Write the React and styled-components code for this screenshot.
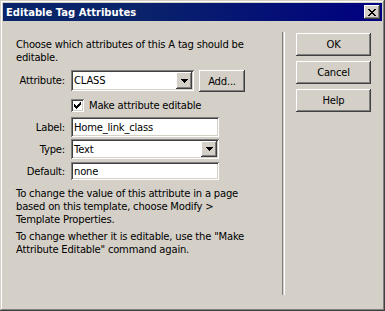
import styled, { createGlobalStyle } from 'styled-components';

const GlobalStyle = createGlobalStyle`
    html, body {
        margin: 0;
        padding: 0;
        background: #D4D0C8;
    }
    body {
        font-family: Tahoma, "DejaVu Sans", Verdana, sans-serif;
        font-size: 10px;
        letter-spacing: -0.2px;
        color: #000;
    }
`;

const raised = `
    background: #D4D0C8;
    box-shadow: inset -1px -1px #404040, inset 1px 1px #FFFFFF,
        inset -2px -2px #808080, inset 2px 2px #D4D0C8;
`;

const sunken = `
    background: #FFFFFF;
    box-shadow: inset 1px 1px #808080, inset -1px -1px #FFFFFF,
        inset 2px 2px #404040, inset -2px -2px #D4D0C8;
`;

const Window = styled.div`
    box-sizing: border-box;
    width: 385px;
    height: 311px;
    padding: 3px;
    background: #D4D0C8;
    box-shadow: inset -1px -1px #404040, inset 1px 1px #D4D0C8,
        inset -2px -2px #808080, inset 2px 2px #FFFFFF;
    display: flex;
    flex-direction: column;
`;

const TitleBar = styled.div`
    height: 18px;
    display: flex;
    align-items: center;
    justify-content: space-between;
    padding: 0 2px 0 3px;
    background: linear-gradient(90deg, #0A246A 0%, #0A246A 35%, #000080 100%);
    color: #fff;
    font-weight: bold;
    font-size: 10px;
    letter-spacing: 0;
`;

const CloseButton = styled.div`
    ${raised}
    width: 16px;
    height: 14px;
    display: flex;
    align-items: center;
    justify-content: center;
`;

const Body = styled.div`
    flex: 1;
    display: flex;
`;

const LeftPane = styled.div`
    width: 266px;
    padding: 17px 0 0 13px;
    display: flex;
    flex-direction: column;
`;

const Separator = styled.div`
    width: 1px;
    margin-top: 11px;
    height: 263px;
    border-left: 1px solid #808080;
    border-right: 1px solid #FFFFFF;
`;

const RightPane = styled.div`
    padding: 12px 0 0 11px;
    display: flex;
    flex-direction: column;
    gap: 5px;
`;

const Button = styled.div`
    ${raised}
    box-sizing: border-box;
    width: ${p => p.$w || 75}px;
    height: ${p => p.$h || 23}px;
    display: flex;
    align-items: center;
    justify-content: center;
    margin-top: ${p => p.$mt || 0}px;
`;

const Para = styled.p`
    margin: ${p => p.$mt || 0}px 0 0 0;
    line-height: 13px;
    width: 236px;
`;

const Row = styled.div`
    display: flex;
    align-items: center;
    margin-top: ${p => p.$mt || 0}px;
`;

const Label = styled.label`
    width: 49px;
    text-align: right;
    margin-right: 6px;
`;

const Field = styled.div`
    ${sunken}
    box-sizing: border-box;
    width: ${p => p.$w}px;
    height: ${p => p.$h}px;
    display: flex;
    align-items: center;
    justify-content: space-between;
    padding: 2px 2px 2px 3px;
`;

const ArrowButton = styled.div`
    ${raised}
    box-sizing: border-box;
    width: 16px;
    height: 100%;
    display: flex;
    align-items: center;
    justify-content: center;
`;

const CheckRow = styled.div`
    display: flex;
    align-items: center;
    margin: 7px 0 0 55px;
    gap: 5px;
`;

const Checkbox = styled.div`
    ${sunken}
    width: 13px;
    height: 13px;
    display: flex;
    align-items: center;
    justify-content: center;
`;

const Arrow = () => (
    <svg width="7" height="4" viewBox="0 0 7 4">
        <path d="M0 0h7v1h-1v1h-1v1h-1v1h-1v-1h-1v-1h-1v-1h-1z" fill="#000" />
    </svg>
);

const Select = ({ width, height, value }) => (
    <Field $w={width} $h={height}>
        <span>{value}</span>
        <ArrowButton><Arrow /></ArrowButton>
    </Field>
);

export default function App() {
    return (
        <>
            <GlobalStyle />
            <Window>
                <TitleBar>
                    <span>Editable Tag Attributes</span>
                    <CloseButton>
                        <svg width="8" height="7" viewBox="0 0 8 7">
                            <path d="M0 0h2v1h1v1h2v-1h1v-1h2v1h-1v1h-1v1h-1v1h1v1h1v1h1v1h-2v-1h-1v-1h-2v1h-1v1h-2v-1h1v-1h1v-1h1v-1h-1v-1h-1v-1h-1z" fill="#000" />
                        </svg>
                    </CloseButton>
                </TitleBar>
                <Body>
                    <LeftPane>
                        <Para>Choose which attributes of this A tag should be editable.</Para>
                        <Row $mt={5}>
                            <Label>Attribute:</Label>
                            <Select width={123} height={21} value="CLASS" />
                            <Button $w={46} $h={22} $mt={1} style={{ marginLeft: 5 }}>Add...</Button>
                        </Row>
                        <CheckRow>
                            <Checkbox>
                                <svg width="7" height="7" viewBox="0 0 7 7">
                                    <path d="M6 0h1v3h-1v1h-1v1h-1v1h-1v1h-1v-1h-1v-1h-1v-3h1v1h1v1h1v-1h1v-1h1z" fill="#000" />
                                </svg>
                            </Checkbox>
                            <span>Make attribute editable</span>
                        </CheckRow>
                        <Row $mt={5}>
                            <Label>Label:</Label>
                            <Field $w={148} $h={20}>Home_link_class</Field>
                        </Row>
                        <Row $mt={2}>
                            <Label>Type:</Label>
                            <Select width={148} height={20} value="Text" />
                        </Row>
                        <Row $mt={3}>
                            <Label>Default:</Label>
                            <Field $w={148} $h={18}>none</Field>
                        </Row>
                        <Para $mt={7}>To change the value of this attribute in a page based on this template, choose Modify &gt; Template Properties.</Para>
                        <Para $mt={4}>To change whether it is editable, use the "Make Attribute Editable" command again.</Para>
                    </LeftPane>
                    <Separator />
                    <RightPane>
                        <Button>OK</Button>
                        <Button>Cancel</Button>
                        <Button>Help</Button>
                    </RightPane>
                </Body>
            </Window>
        </>
    );
}
